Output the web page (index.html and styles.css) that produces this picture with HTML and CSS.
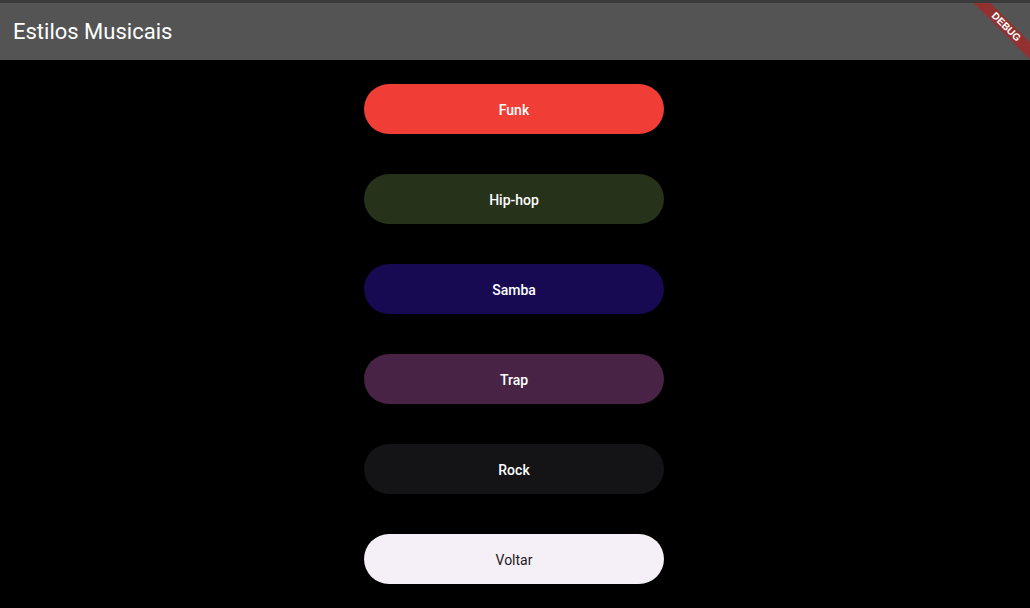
FILE: index.html
```html
<!DOCTYPE html>
<html lang="pt">
<head>
<meta charset="utf-8">
<title>Estilos Musicais</title>
<link rel="stylesheet" href="styles.css">
</head>
<body>
<div class="status"></div>
<header class="appbar">
  <h1 class="title">Estilos Musicais</h1>
  <div class="banner">DEBUG</div>
</header>
<main class="list">
  <button class="btn funk">Funk</button>
  <button class="btn hiphop">Hip-hop</button>
  <button class="btn samba">Samba</button>
  <button class="btn trap">Trap</button>
  <button class="btn rock">Rock</button>
  <button class="btn back">Voltar</button>
</main>
</body>
</html>
```
FILE: styles.css
```css
html, body {
  margin: 0;
  padding: 0;
  background: #000;
  font-family: Roboto, "Noto Sans", sans-serif;
  height: 100%;
  overflow: hidden;
}
.status {
  height: 3px;
  background: #3b3b3b;
}
.appbar {
  position: relative;
  height: 57px;
  background: #545454;
  display: flex;
  align-items: center;
  padding-left: 13px;
  overflow: hidden;
}
.title {
  margin: 0;
  font-size: 22px;
  font-weight: 400;
  color: #fff;
  line-height: 28px;
}
.banner {
  position: absolute;
  top: 18px;
  right: -26px;
  width: 100px;
  height: 12px;
  line-height: 12px;
  background: rgba(183, 28, 28, 0.63);
  color: #fff;
  font-family: "Liberation Sans", Arial, sans-serif;
  font-size: 10px;
  font-weight: 700;
  text-align: center;
  transform: rotate(45deg);
}
.list {
  display: flex;
  flex-direction: column;
  align-items: center;
  gap: 40px;
  padding-top: 24px;
  padding-right: 2px;
}
.btn {
  width: 300px;
  height: 50px;
  border: none;
  border-radius: 25px;
  font-family: Roboto, "Noto Sans", sans-serif;
  font-size: 14px;
  font-weight: 500;
  color: #fff;
  padding: 2px 0 0;
}
.funk { background: #f03e36; }
.hiphop { background: #27321b; }
.samba { background: #170a52; }
.trap { background: #482345; }
.rock { background: #141416; }
.back { background: #f5eff7; color: #1d1b20; font-weight: 400; }
```
